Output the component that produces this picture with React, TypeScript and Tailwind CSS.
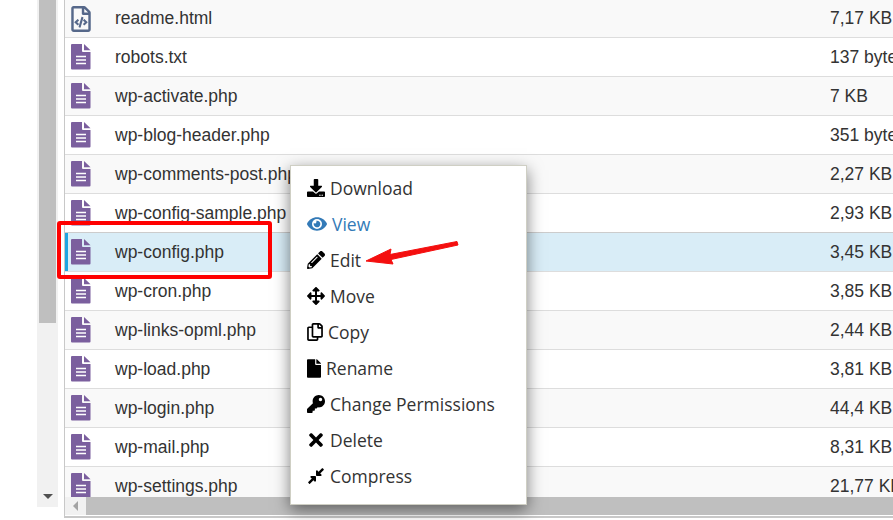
import { FaDownload, FaEye, FaPencilAlt, FaArrowsAlt, FaRegCopy, FaFile, FaKey, FaTimes, FaCompressAlt, FaRegFileCode } from "react-icons/fa";
import type { ReactNode } from "react";

const files = [
  ["robots.txt", "137 bytes"],
  ["wp-activate.php", "7 KB"],
  ["wp-blog-header.php", "351 bytes"],
  ["wp-comments-post.php", "2,27 KB"],
  ["wp-config-sample.php", "2,93 KB"],
  ["wp-config.php", "3,45 KB"],
  ["wp-cron.php", "3,85 KB"],
  ["wp-links-opml.php", "2,44 KB"],
  ["wp-load.php", "3,81 KB"],
  ["wp-login.php", "44,4 KB"],
  ["wp-mail.php", "8,31 KB"],
  ["wp-settings.php", "21,77 KB"],
];

const menu: { label: string; icon: ReactNode; cls?: string }[] = [
  { label: "Download", icon: <FaDownload className="w-[18px] h-[18px] mr-[5px]" /> },
  { label: "View", icon: <FaEye className="w-[20px] h-[20px] mr-[5px]" />, cls: "text-[#337ab7]" },
  { label: "Edit", icon: <FaPencilAlt className="w-[18px] h-[18px] mr-[5px]" /> },
  { label: "Move", icon: <FaArrowsAlt className="w-[18px] h-[18px] mr-[5px]" /> },
  { label: "Copy", icon: <FaRegCopy className="w-[16px] h-[18px] mr-[5px]" /> },
  { label: "Rename", icon: <FaFile className="w-[14px] h-[19px] mr-[5px]" /> },
  { label: "Change Permissions", icon: <FaKey className="w-[18px] h-[18px] mr-[5px]" /> },
  { label: "Delete", icon: <FaTimes className="w-[18px] h-[20px] mr-[5px]" /> },
  { label: "Compress", icon: <FaCompressAlt className="w-[18px] h-[18px] mr-[5px]" /> },
];

function DocIcon() {
  return (
    <svg width="20" height="26" viewBox="0 0 20 26" className="text-[#7b5f9e]">
      <path d="M1 0h10v7a1 1 0 0 0 1 1h7.500v16.500a1 1 0 0 1-1 1H1a1 1 0 0 1-1-1V1a1 1 0 0 1 1-1z" fill="currentColor" />
      <path d="M13 0l6.500 6.300H13z" fill="currentColor" />
      <path d="M5 12.500h10M5 16h10M5 19.500h10" stroke="#fff" strokeWidth="1.600" />
    </svg>
  );
}

function Row({ name, size, odd, selected }: { name: string; size: string; odd: boolean; selected: boolean }) {
  return (
    <div className={`flex items-center h-[39px] shrink-0 border-b border-[#ddd] whitespace-nowrap ${selected ? "bg-[#d9edf7] border-t border-t-[#ccc] -mt-px h-[40px]" : odd ? "bg-[#f9f9f9]" : "bg-white"}`}>
      <div className={`w-[50px] shrink-0 flex items-center ${selected ? "self-stretch border-l-[3px] border-[#1fa4e0] pl-[3px]" : "pl-[6px]"}`}>
        <DocIcon />
      </div>
      <div className="w-[715px] shrink-0">{name}</div>
      <div>{size}</div>
    </div>
  );
}

export default function App() {
  return (
    <div className="relative flex h-[520px] w-[893px] overflow-hidden bg-white text-[#333] text-[17.500px] font-['Liberation_Sans',Arial,sans-serif]">
      <div className="ml-[37px] w-[21px] h-[507px] shrink-0 bg-[#f1f1f1] flex flex-col items-center justify-between">
        <div className="w-[17px] h-[323px] bg-[#bfbfbf]" />
        <div className="mb-[8px] border-x-[5px] border-x-transparent border-t-[5px] border-t-[#505050]" />
      </div>

      <div className="ml-[6px] flex-1 min-w-0 h-[518px] border-l border-b-2 border-[#c8c8c8] flex flex-col overflow-hidden">
        <div className="h-[497px] overflow-hidden flex flex-col">
          <div className="flex items-center h-[38px] shrink-0 border-b border-[#ddd] bg-[#f9f9f9] whitespace-nowrap">
            <div className="w-[50px] shrink-0 pl-[6px]">
              <FaRegFileCode className="w-[20px] h-[26px] text-[#56688a]" />
            </div>
            <div className="w-[715px] shrink-0">readme.html</div>
            <div>7,17 KB</div>
          </div>
          {files.map((f, i) => (
            <Row key={f[0]} name={f[0]} size={f[1]} odd={i % 2 === 1} selected={f[0] === "wp-config.php"} />
          ))}
        </div>
        <div className="h-[18px] shrink-0 bg-[#f1f1f1] flex items-center">
          <div className="ml-[8px] w-0 h-0 border-y-[5px] border-y-transparent border-r-[5px] border-r-[#a3a3a3]" />
          <div className="ml-[8px] flex-1 h-[18px] bg-[#bfbfbf]" />
        </div>
      </div>

      {/* context menu */}
      <div className="absolute left-[290px] top-[165px] w-[237px] h-[340px] pt-[4px] bg-white border border-[#cfcfc4] shadow-[0_5px_15px_rgba(0,0,0,0.5)] text-[17.500px] text-[#333] font-['Open_Sans',sans-serif]">
        {menu.map((m) => (
          <div key={m.label} className={`flex items-center h-[36px] pl-[16px] whitespace-nowrap ${m.cls ?? ""}`}>
            <span className={m.cls ? "" : "text-black"}>{m.icon}</span>
            <span>{m.label}</span>
          </div>
        ))}
      </div>

      {/* red annotations */}
      <div className="absolute left-[57px] top-[221px] w-[215px] h-[58px] border-[4px] border-[#ff0000] rounded-[3px]" />
      <svg className="absolute left-[360px] top-[235px]" width="105" height="35" viewBox="0 0 105 35">
        <path d="M97 6.500L30 19.500L31 14L6 26L33 29L31 24.500L98 10z" fill="#f40f0f" stroke="#f40f0f" strokeLinejoin="round" />
      </svg>
    </div>
  );
}
